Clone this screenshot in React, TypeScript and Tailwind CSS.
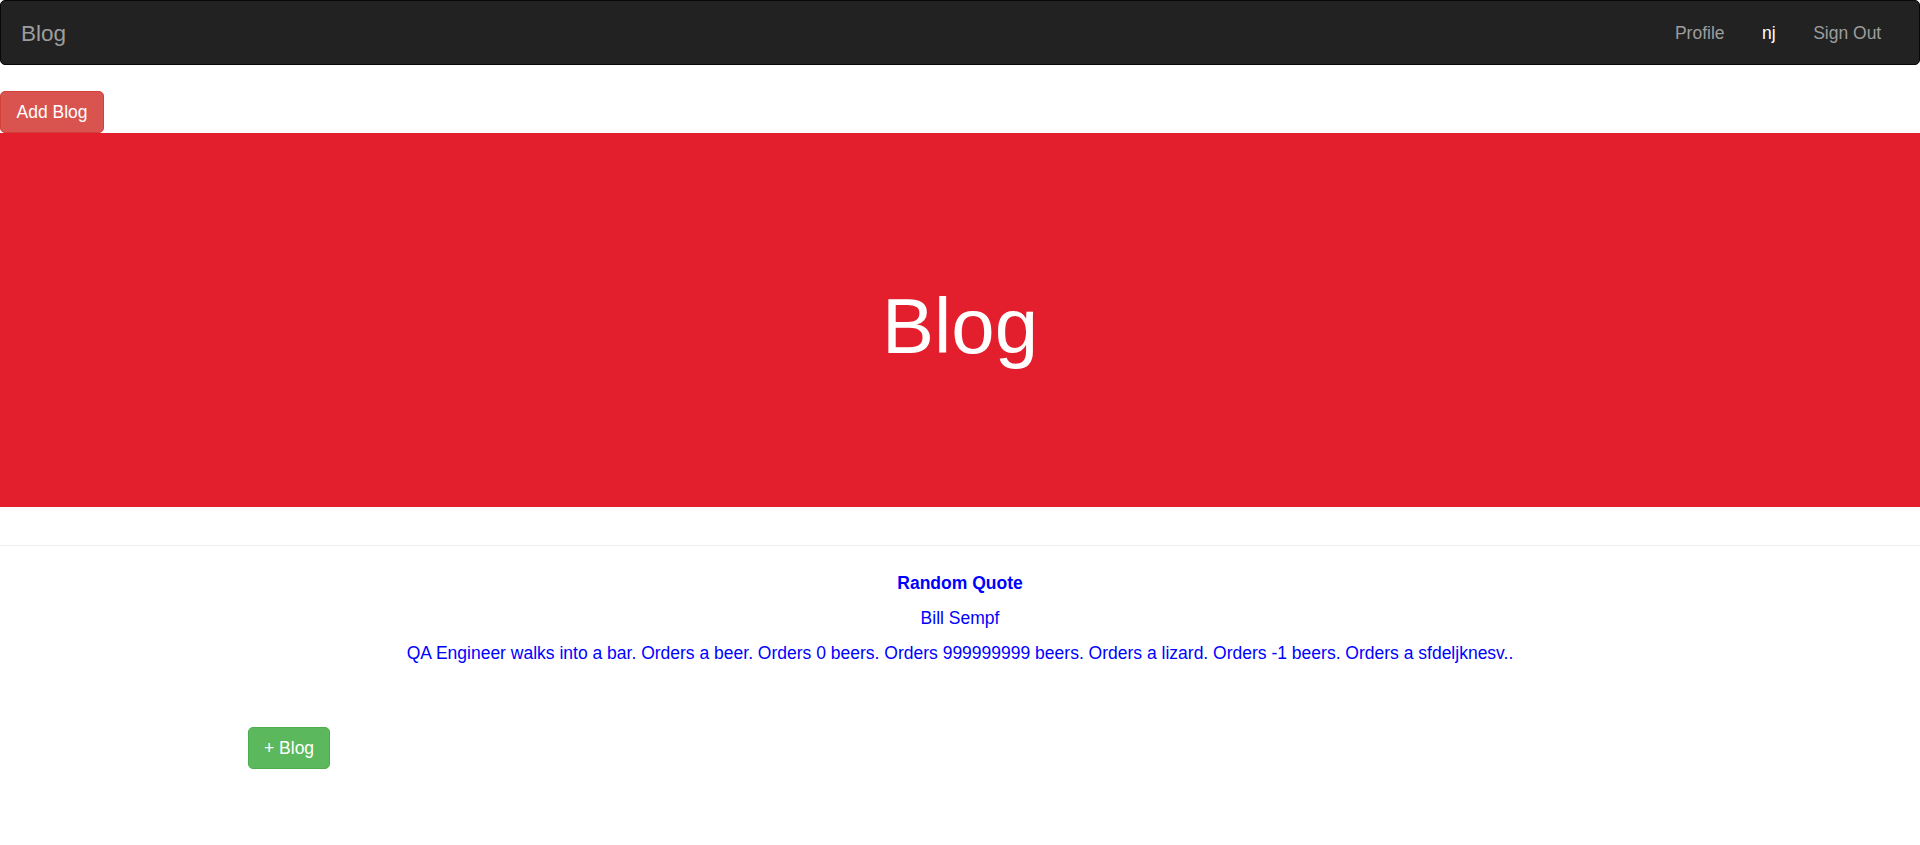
const font = { fontFamily: '"Liberation Sans", Arial, sans-serif' };

const NavBar = () => {
  return (
    <nav className="h-[65px] bg-[#222222] border border-[#080808] rounded-[5px] flex items-center justify-between pt-[2px]">
      <a className="pl-[20px] text-[22.5px] text-[#9d9d9d] leading-[25px]">Blog</a>
      <ul className="flex items-center mr-[19px] text-[17.5px] leading-[25px]">
        <li className="px-[18.75px] text-[#9d9d9d]">Profile</li>
        <li className="px-[18.75px] text-white">nj</li>
        <li className="px-[18.75px] text-[#9d9d9d]">Sign Out</li>
      </ul>
    </nav>
  );
};

const Quote = () => {
  return (
    <div className="flex flex-col items-center text-[17.5px] leading-[25px] text-[#0000ff]">
      <span className="font-bold">Random Quote</span>
      <span className="mt-[10px]">Bill Sempf</span>
      <span className="mt-[9.5px]">
        QA Engineer walks into a bar. Orders a beer. Orders 0 beers. Orders 999999999 beers. Orders a lizard. Orders -1 beers. Orders a sfdeljknesv..
      </span>
    </div>
  );
};

export default function App() {
  return (
    <div className="w-[1920px] h-[845px] bg-white overflow-hidden" style={font}>
      <NavBar />

      <button className="mt-[26px] h-[42px] px-[15.5px] bg-[#d9534f] border border-[#d43f3a] rounded-[5px] text-white text-[17.5px] leading-[25px]">
        Add Blog
      </button>

      <div className="h-[374px] bg-[#e31e2d] flex items-center justify-center pt-[11px]">
        <h1 className="text-[78px] leading-none text-white">Blog</h1>
      </div>

      <hr className="mt-[38px] border-t border-[#eeeeee]" />

      <div className="pt-[25px]">
        <Quote />
      </div>

      <div className="mt-[61.5px] pl-[248px]">
        <button className="h-[42px] px-[15px] bg-[#5cb85c] border border-[#4cae4c] rounded-[5px] text-white text-[17.5px] leading-[25px]">
          + Blog
        </button>
      </div>
    </div>
  );
}
